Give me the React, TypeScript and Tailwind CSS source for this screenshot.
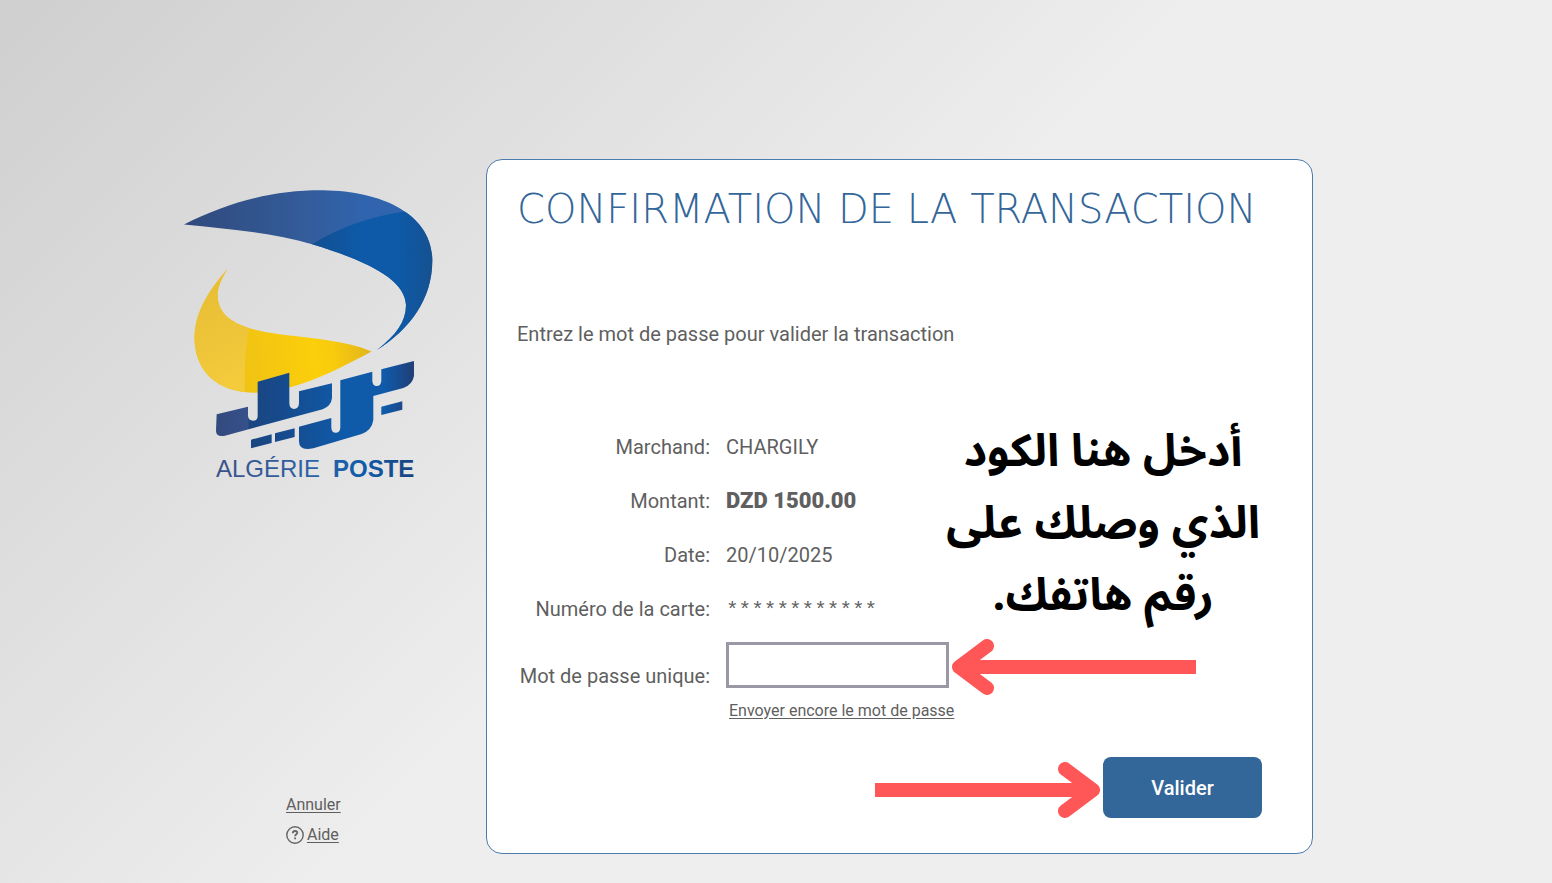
import React from "react";

function PosteLogo() {
  return (
    <svg viewBox="180 185 260 300" className="block h-[300px] w-[260px]" role="img" aria-label="Algérie Poste">
      <defs>
        <linearGradient id="sweepLight" gradientUnits="userSpaceOnUse" x1="184" y1="0" x2="410" y2="0">
          <stop offset="0" stopColor="#30497c" />
          <stop offset="0.5" stopColor="#335b98" />
          <stop offset="0.8" stopColor="#3064ae" />
          <stop offset="1" stopColor="#3064ae" />
        </linearGradient>
        <linearGradient id="sweepDark" gradientUnits="userSpaceOnUse" x1="313" y1="0" x2="433" y2="0">
          <stop offset="0" stopColor="#114f91" />
          <stop offset="0.4" stopColor="#0e5aa8" />
          <stop offset="0.7" stopColor="#0e5aa8" />
          <stop offset="1" stopColor="#155190" />
        </linearGradient>
        <linearGradient id="gold" gradientUnits="userSpaceOnUse" x1="245" y1="360" x2="371" y2="345">
          <stop offset="0" stopColor="#f1c314" />
          <stop offset="0.55" stopColor="#fbcf0a" />
          <stop offset="0.7" stopColor="#f8cb0d" />
          <stop offset="1" stopColor="#e2b31d" />
        </linearGradient>
        <linearGradient id="goldLight" gradientUnits="userSpaceOnUse" x1="200" y1="300" x2="240" y2="380">
          <stop offset="0" stopColor="#e9bf36" />
          <stop offset="1" stopColor="#f3cb3b" />
        </linearGradient>
        <linearGradient id="script" gradientUnits="userSpaceOnUse" x1="138" y1="0" x2="733" y2="0">
          <stop offset="0" stopColor="#334a7e" />
          <stop offset="0.16" stopColor="#36508a" />
          <stop offset="0.17" stopColor="#194680" />
          <stop offset="0.3" stopColor="#17498a" />
          <stop offset="0.65" stopColor="#0f5aa9" />
          <stop offset="0.85" stopColor="#0f5aa9" />
          <stop offset="1" stopColor="#213e76" />
        </linearGradient>
        <linearGradient id="wordmark" gradientUnits="userSpaceOnUse" x1="216" y1="0" x2="415" y2="0">
          <stop offset="0" stopColor="#3c5188" />
          <stop offset="0.5" stopColor="#2b62a6" />
          <stop offset="0.75" stopColor="#0f5aa9" />
          <stop offset="1" stopColor="#1b437e" />
        </linearGradient>
        <clipPath id="sweepClip">
          <path d="M184 224.5C230 201 275 190 323 190.3C385 191 432 216 432.3 260C432.5 299 410 329 377 350C396 335 406 322 406 305C405 280 370 262 313 244.5C270 232 228 229 184 224.5Z" />
        </clipPath>
        <clipPath id="goldClip">
          <path d="M227.5 269C206 293 194 316 194.5 340C196 373 218 393 258 392.8C298 390 335 371 371.5 351.5C346 340 306 338 278 334C240 329 217 318 217.6 294C218 286 222 278 227.5 269Z" />
        </clipPath>
      </defs>
      <g clipPath="url(#sweepClip)">
        <rect x="180" y="185" width="260" height="170" fill="url(#sweepLight)" />
        <path d="M311 245C340 227 370 216 408 211L440 211V360H311Z" fill="url(#sweepDark)" />
      </g>
      <g clipPath="url(#goldClip)">
        <rect x="190" y="265" width="190" height="130" fill="url(#gold)" />
        <path d="M249 260V328C246 345 244 365 245 400H185V260Z" fill="url(#goldLight)" />
      </g>
      <g transform="translate(170 340) scale(0.3333)" fill="url(#script)">
        <path d="M140 223L234 200V228Q236 242 249 242Q263 242 263 228V125L358 98V190Q359 207 372 207Q386 207 387 190V154L486 130V175Q483 199 458 208L165 287Q138 292 138 272Z" />
        <path d="M387 260L484 234V263Q485 278 497 278Q510 278 511 263V121L607 95V122Q608 138 620 138Q633 138 634 122V88L732 63V108Q727 135 700 144L610 168V240Q606 270 575 282L430 325Q387 335 387 303Z" />
        <path d="M243 299L305 283V309L243 325ZM315 280L374 265V291L315 306ZM634 200L697 184V209L634 225Z" />
      </g>
      <text y="477" fontSize="24" fill="url(#wordmark)" className="font-['Liberation_Sans',sans-serif]">
        <tspan x="216">ALGÉRIE</tspan>
        <tspan x="333" fontWeight="700">POSTE</tspan>
      </text>
    </svg>
  );
}

function Arrow({ length, className }: { length: number; className: string }) {
  return (
    <svg width={length} height="58" viewBox={`0 0 ${length} 58`} aria-hidden="true" className={className}>
      <path d={`M12 29H${length}`} stroke="#ff5757" strokeWidth="14" />
      <path d="M36 8L8 29L36 50" fill="none" stroke="#ff5757" strokeWidth="14" strokeLinecap="round" strokeLinejoin="round" />
    </svg>
  );
}

const details = [
  { label: "Marchand:", value: "CHARGILY", style: "" },
  { label: "Montant:", value: "DZD 1500.00", style: "text-[22px] font-black" },
  { label: "Date:", value: "20/10/2025", style: "" },
  { label: "Numéro de la carte:", value: "************", style: "pt-1 font-['Liberation_Mono',monospace] text-[21px]" },
];

export default function App() {
  return (
    <div className="min-h-screen bg-[linear-gradient(135deg,#cfcfcf_0%,#eeeeee_50%)] pt-[159px] pr-[239px] pb-7 pl-[180px] font-['Roboto',sans-serif] text-xl leading-6 text-[#5f5f5f]">
      <div className="flex">
        <aside className="flex w-[306px] shrink-0 flex-col justify-between pt-[26px] pb-[7px]">
          <PosteLogo />
          <nav className="ml-[106px] flex flex-col items-start gap-1.5 text-base leading-6">
            <a href="#annuler" className="underline underline-offset-2">Annuler</a>
            <a href="#aide" className="flex items-center gap-[3px]">
              <svg viewBox="0 0 18 18" aria-hidden="true" className="h-[18px] w-[18px]" fill="none" stroke="#666" strokeWidth="1.4">
                <circle cx="9" cy="9" r="8.2" />
                <path d="M6.8 7.2C6.8 5.8 7.8 5 9.1 5C10.4 5 11.3 5.7 11.3 6.8C11.3 8.3 9.1 8.3 9.1 10.2M9.1 11.6V13.2" strokeWidth="1.8" />
              </svg>
              <span className="underline underline-offset-2">Aide</span>
            </a>
          </nav>
        </aside>

        <main className="relative min-w-0 flex-1 rounded-2xl border border-[#4c7bad] bg-white px-[30px] pt-6 pb-[35px]">
          <h1 className="font-['DejaVu_Sans',sans-serif] text-[40px] leading-[50px] font-extralight whitespace-nowrap text-[#336699]">
            CONFIRMATION DE LA TRANSACTION
          </h1>
          <p className="mt-[88px]">Entrez le mot de passe pour valider la transaction</p>

          <form className="mt-[74px]" onSubmit={(event) => event.preventDefault()}>
            <dl>
              {details.map((item) => (
                <div key={item.label} className="flex h-[54px] items-center gap-4">
                  <dt className="w-[193px] shrink-0 text-right whitespace-nowrap">{item.label}</dt>
                  <dd className={item.style}>{item.value}</dd>
                </div>
              ))}
            </dl>
            <div className="mt-1.5 flex items-end gap-4">
              <label htmlFor="otp" className="w-[193px] shrink-0 text-right whitespace-nowrap">Mot de passe unique:</label>
              <input id="otp" type="text" autoComplete="one-time-code" className="h-[46px] w-[223px] border-[3px] border-[#9a98a5] bg-white px-2 outline-none" />
            </div>
            <a href="#renvoyer" className="mt-[11px] ml-[212px] inline-block text-base leading-6 underline underline-offset-2">
              Envoyer encore le mot de passe
            </a>
            <div className="mt-[34px] flex justify-end pr-5">
              <button type="submit" className="h-[61px] w-[159px] rounded-lg bg-[#336699] font-medium text-white">Valider</button>
            </div>
          </form>

          <p dir="rtl" lang="ar" className="absolute top-[256px] right-[52px] text-center font-['Noto_Sans_Arabic','DejaVu_Sans',sans-serif] text-[45px] leading-[72px] font-bold whitespace-nowrap text-black">
            أدخل هنا الكود
            <br />
            الذي وصلك على
            <br />
            رقم هاتفك.
          </p>
          <Arrow length={245} className="absolute top-[478px] left-[464px]" />
          <Arrow length={226} className="absolute top-[601px] left-[388px] rotate-180" />
        </main>
      </div>
    </div>
  );
}
